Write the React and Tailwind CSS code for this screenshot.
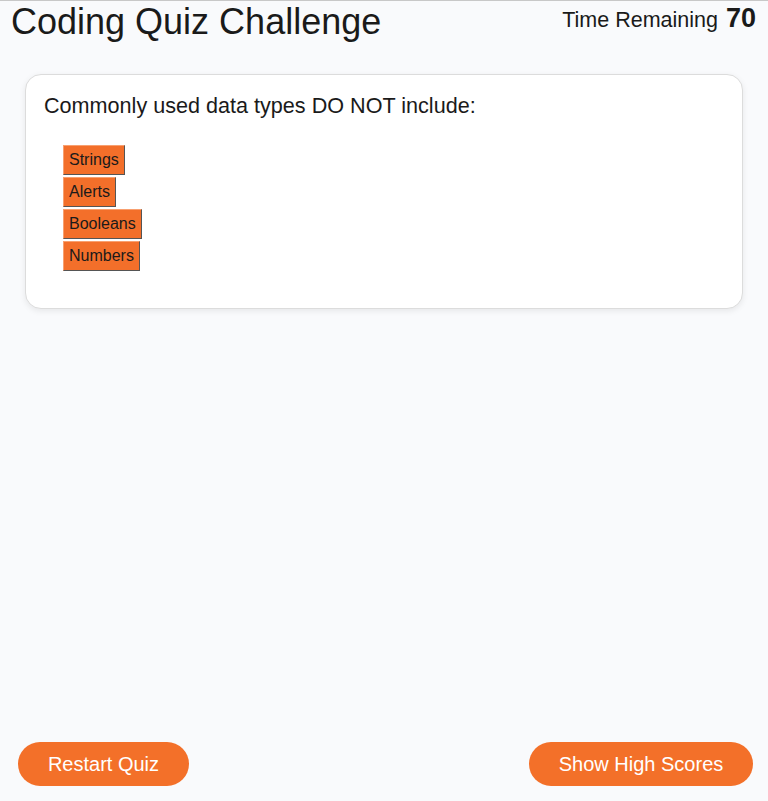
import React from 'react';

const choices = ['Strings', 'Alerts', 'Booleans', 'Numbers'];

export default function App() {
    return (
        <div
            className="flex h-screen flex-col bg-[#f9fafc] border-t border-[#c8c8c8] text-[#1a1a1a]"
            style={{ fontFamily: '"Liberation Sans", Arial, sans-serif' }}
        >
            {/* Header */}
            <header className="flex items-start justify-between pl-[11px] pr-[12px] pt-[1px]">
                <h1 className="text-[36px] leading-[40px]">Coding Quiz Challenge</h1>
                <div className="flex items-baseline gap-[8px] -mt-[4px]">
                    <span className="text-[21.5px]">Time Remaining</span>
                    <span className="text-[27px] font-bold">70</span>
                </div>
            </header>

            {/* Question card */}
            <section className="mx-[25px] mt-[32px] h-[235px] rounded-[16px] border border-[#dcdcdc] bg-white px-[18px] pt-[18px] shadow-[0_2px_6px_rgba(0,0,0,0.08)]">
                <p className="text-[21.6px] leading-[26px]">Commonly used data types DO NOT include:</p>
                <ul className="mt-[26px] flex flex-col items-start gap-[2px] pl-[19px]">
                    {choices.map((c) => (
                        <li key={c}>
                            <button className="h-[30px] border border-t-[#f8a070] border-l-[#f8a070] border-b-[#555] border-r-[#555] bg-[#f36f2a] px-[5px] text-[16px] text-[#1a1a1a]">
                                {c}
                            </button>
                        </li>
                    ))}
                </ul>
            </section>

            <div className="flex-1" />

            {/* Footer */}
            <footer className="flex justify-between px-[15px] pb-[15px]">
                <button className="h-[44px] w-[171px] rounded-full bg-[#f37029] text-[20px] text-white ml-[3px]">
                    Restart Quiz
                </button>
                <button className="h-[44px] w-[224px] rounded-full bg-[#f37029] text-[20px] text-white">
                    Show High Scores
                </button>
            </footer>
        </div>
    );
}
